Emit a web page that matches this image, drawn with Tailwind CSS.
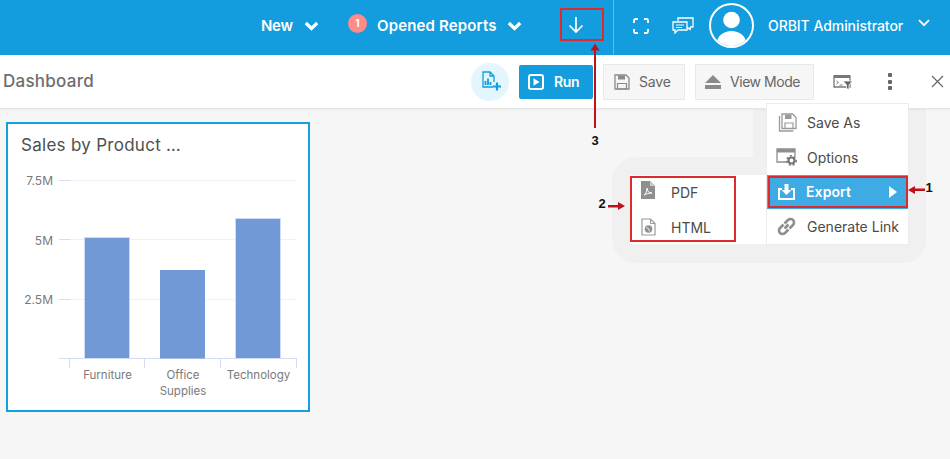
<!DOCTYPE html>
<html>
<head>
<meta charset="utf-8">
<script src="https://cdn.jsdelivr.net/npm/@tailwindcss/browser@4"></script>
</head>
<body class="font-['Inter','Liberation_Sans',sans-serif]">
<div class="relative w-[950px] h-[459px] overflow-hidden bg-[#f6f6f6] flex flex-col">

  <!-- Top bar -->
  <header class="h-[55px] shrink-0 bg-[#139cde] flex items-center text-white pl-[261px]">
    <span class="w-[32px] -mt-[2px] text-[15px] font-semibold tracking-[-0.3px] whitespace-nowrap">New</span>
    <svg class="ml-[11px] -mt-[4px] w-[15px] h-[10px]" viewBox="0 0 15 10"><path d="M1.800 2l5.700 5.500L13.200 2" fill="none" stroke="#fff" stroke-width="3.200"/></svg>
    <span class="ml-[29px] w-[19px] h-[19px] -mt-[9px] rounded-full bg-[#ff8a8a] flex items-center justify-center text-[10px] font-bold">1</span>
    <span class="ml-[10px] w-[120px] -mt-[2px] text-[15px] font-semibold tracking-[0.15px] whitespace-nowrap">Opened Reports</span>
    <svg class="ml-[10px] -mt-[4px] w-[15px] h-[10px]" viewBox="0 0 15 10"><path d="M1.800 2l5.700 5.500L13.200 2" fill="none" stroke="#fff" stroke-width="3.200"/></svg>
    <svg class="ml-[46px] -mt-[5px] w-[16px] h-[18px]" viewBox="0 0 16 18"><path d="M8 1v15M1.500 9.500L8 16l6.500-6.500" fill="none" stroke="#fff" stroke-width="1.700"/></svg>
    <div class="ml-[29px] w-[1px] h-[55px] bg-[#5fbce9]"></div>
    <svg class="ml-[19px] -mt-[4px] w-[16px] h-[16px]" viewBox="0 0 16 16"><path d="M1 5V2.500A1.500 1.500 0 0 1 2.500 1H5M11 1h2.500A1.500 1.500 0 0 1 15 2.500V5M15 11v2.500a1.500 1.500 0 0 1-1.500 1.500H11M5 15H2.500A1.500 1.500 0 0 1 1 13.500V11" fill="none" stroke="#fff" stroke-width="1.800"/></svg>
    <svg class="ml-[23px] -mt-[4px] w-[22px] h-[18px]" viewBox="0 0 22 18"><path d="M6 4V1h15v9h-2.500l-.5 2.500-3-2.500M1 5h14v8H6l-3 3v-3H1z" fill="none" stroke="#fff" stroke-width="1.300"/><path d="M4 8h8M4 10.500h6" stroke="#fff" stroke-width="1"/></svg>
    <div class="ml-[15px] -mt-[5px] w-[45px] h-[45px] rounded-full border-2 border-white overflow-hidden relative shrink-0">
      <svg class="w-full h-full" viewBox="0 0 41 41"><circle cx="20.500" cy="15" r="8.300" fill="#fff"/><ellipse cx="20.500" cy="38" rx="14.500" ry="12" fill="#fff"/></svg>
    </div>
    <span class="ml-[14px] w-[136px] -mt-[4px] text-[14px] font-medium tracking-[-0.05px] whitespace-nowrap">ORBIT Administrator</span>
    <svg class="ml-[14px] -mt-[9px] w-[12px] h-[8px]" viewBox="0 0 12 8"><path d="M1 1.200l5 5 5-5" fill="none" stroke="#fff" stroke-width="1.800"/></svg>
  </header>

  <!-- Toolbar -->
  <div class="relative z-20 h-[54px] shrink-0 bg-white border-b border-[#e4e4e4] shadow-[0_1px_2px_rgba(0,0,0,0.05)] flex items-center pl-[3px]">
    <span class="w-[468px] text-[17px] font-medium text-[#6e6e6e] tracking-[0.25px]">Dashboard</span>
    <div class="w-[38px] h-[38px] rounded-full bg-[#e3f5fd] flex items-center justify-center">
      <svg class="w-[20px] h-[21px] ml-[2px]" viewBox="0 0 20 21"><path d="M12 16H2V1h7l4 4v6M9 1v4h4" fill="none" stroke="#139cde" stroke-width="1.300"/><path d="M4.500 14V10M7 14V7.500M9.500 14v-3" stroke="#139cde" stroke-width="1.800"/><path d="M16 11.500v8M12 15.500h8" stroke="#139cde" stroke-width="2.200"/></svg>
    </div>
    <button class="ml-[10px] w-[74px] h-[34px] rounded-[2px] bg-[#139cde] text-white flex items-center pl-[9px]">
      <svg class="w-[16px] h-[16px]" viewBox="0 0 16 16"><rect x="1" y="1" width="14" height="14" rx="2" fill="none" stroke="#fff" stroke-width="2"/><path d="M5.500 4.200v7.600L11.500 8z" fill="#fff"/></svg>
      <span class="ml-[10px] text-[14px] font-semibold tracking-[-0.3px]">Run</span>
    </button>
    <button class="ml-[10px] w-[82px] h-[36px] bg-[#f6f6f6] border border-[#e9e9e9] text-[#666] flex items-center pl-[10px]">
      <svg class="w-[16px] h-[16px]" viewBox="0 0 16 16"><path d="M1 1h11l3 3v11H1z" fill="none" stroke="#8a8a8a" stroke-width="1.300"/><path d="M4 1.500h7v4H4z" fill="#8a8a8a"/><path d="M3.500 9.500h9V15h-9z" fill="none" stroke="#8a8a8a" stroke-width="1.200"/></svg>
      <span class="ml-[9px] text-[14px] tracking-[-0.2px]">Save</span>
    </button>
    <button class="ml-[10px] w-[119px] h-[36px] bg-[#f6f6f6] border border-[#e9e9e9] text-[#666] flex items-center pl-[8px]">
      <svg class="w-[18px] h-[16px]" viewBox="0 0 18 16"><path d="M9 1l8 8H1z" fill="#8a8a8a"/><rect x="1" y="11" width="16" height="4" fill="#8a8a8a"/></svg>
      <span class="ml-[8px] text-[14px] tracking-[-0.45px] whitespace-nowrap">View Mode</span>
    </button>
    <svg class="ml-[19px] w-[20px] h-[16px]" viewBox="0 0 20 16"><path d="M1 2h16v11H1z" fill="none" stroke="#777" stroke-width="1.300"/><path d="M1 1h16v3H1z" fill="#777"/><path d="M3.500 7l2 1.500-2 1.500M6.500 11h3" fill="none" stroke="#777" stroke-width="1"/><path d="M10 7h9.500l-3.500 4v4.500l-2.500-1V11z" fill="#666" stroke="#fff" stroke-width=".8"/></svg>
    <div class="ml-[35px] w-[4px] flex flex-col gap-[2.500px]">
      <span class="w-[4px] h-[4px] bg-[#666] rounded-[1px]"></span>
      <span class="w-[4px] h-[4px] bg-[#666] rounded-[1px]"></span>
      <span class="w-[4px] h-[4px] bg-[#666] rounded-[1px]"></span>
    </div>
    <svg class="ml-[39px] w-[13px] h-[13px]" viewBox="0 0 13 13"><path d="M1 1l11 11M12 1L1 12" stroke="#666" stroke-width="1.200"/></svg>
  </div>

  <!-- Canvas -->
  <main class="flex-1 pl-[6px] pt-[13px]">
    <section class="w-[304px] h-[290px] bg-white border-2 border-[#139fe0] relative">
      <h2 class="absolute left-[13px] top-[9px] text-[17px] text-[#4f4f4f] tracking-[0.28px] whitespace-nowrap">Sales by Product …</h2>
      <svg class="absolute left-[-2px] top-[-2px]" width="304" height="290" viewBox="6 122 304 290">
        <g stroke="#f0f1f5" stroke-width="1">
          <path d="M59 180.500h237M59 239.500h237M59 299.500h237"/>
        </g>
        <g stroke="#d3dcf3" stroke-width="1">
          <path d="M59 180.500h11M59 239.500h11M59 299.500h11"/>
          <path d="M59 358.500h238M69.500 358v10M144.500 358v10M220.500 358v10M296.500 358v10"/>
        </g>
        <g fill="#7099d6" stroke="#cfdcf5" stroke-width="1">
          <rect x="84.500" y="237.500" width="45" height="121"/>
          <rect x="160" y="270" width="45" height="88.500" stroke="none"/>
          <rect x="235.500" y="218.500" width="45" height="140"/>
        </g>
        <g font-family="Inter, Liberation Sans, sans-serif" font-size="12" fill="#7a7a7a">
          <text x="53" y="185" text-anchor="end">7.5M</text>
          <text x="53" y="245" text-anchor="end">5M</text>
          <text x="53" y="304" text-anchor="end">2.5M</text>
        </g>
        <g font-family="Inter, Liberation Sans, sans-serif" font-size="11.500" fill="#7a7a7a" text-anchor="middle">
          <text x="107.500" y="379">Furniture</text>
          <text x="183" y="379">Office</text>
          <text x="183" y="395">Supplies</text>
          <text x="258.500" y="379">Technology</text>
        </g>
      </svg>
    </section>
  </main>

  <!-- Halo behind the menus -->
  <div class="absolute z-10 left-[612px] top-[157px] w-[180px] h-[106px] rounded-[24px] bg-[#f0f0f0]"></div>
  <div class="absolute z-10 left-[753px] top-[90px] w-[173px] h-[173px] rounded-[22px] bg-[#f0f0f0]"></div>

  <!-- Export submenu -->
  <div class="absolute z-30 left-[630px] top-[175px] w-[136px] h-[69px] bg-white flex flex-col text-[14px] text-[#4a4a4a]">
    <div class="h-[35px] flex items-center pl-[11px]">
      <svg class="w-[14px] h-[18px] -mt-[5px]" viewBox="0 0 14 18"><path d="M0 0h9l5 5v13H0z" fill="#8f8f8f"/><path d="M9 0v5h5" fill="#c9c9c9"/><path d="M3 14c2-1 3-4 3-7 0 3 2 5 5 5-3 0-6 1-8 2z" fill="none" stroke="#fff" stroke-width="1"/></svg>
      <span class="ml-[16px]">PDF</span>
    </div>
    <div class="h-[34px] flex items-center pl-[11px]">
      <svg class="w-[15px] h-[18px]" viewBox="0 0 15 18"><path d="M1 1h8.500L14 5.500V17H1z" fill="none" stroke="#9a9a9a" stroke-width="1.200"/><path d="M9.500 1v4.500H14" fill="none" stroke="#9a9a9a"/><circle cx="7.500" cy="11" r="3.800" fill="#8f8f8f"/><path d="M5 9.500l2.500 1 1 3" fill="none" stroke="#fff" stroke-width=".8"/></svg>
      <span class="ml-[15px]">HTML</span>
    </div>
  </div>

  <!-- Main menu -->
  <div class="absolute z-30 left-[766px] top-[103px] w-[143px] h-[142px] bg-white border border-[#ececec] flex flex-col text-[14px] text-[#4a4a4a] pt-[1px]">
    <div class="h-[35px] flex items-center pl-[11px]">
      <svg class="w-[19px] h-[19px]" viewBox="0 0 19 19"><path d="M1.500 3v15h14" fill="none" stroke="#9a9a9a" stroke-width="1.300"/><path d="M4 1h10.500L18 4.500V15.500H4z" fill="none" stroke="#9a9a9a" stroke-width="1.300"/><path d="M7 1.500h6.500v4.500H7z" fill="#9a9a9a"/><path d="M7 10h8v5.500H7z" fill="none" stroke="#9a9a9a" stroke-width="1.200"/></svg>
      <span class="ml-[10px]">Save As</span>
    </div>
    <div class="h-[35px] flex items-center pl-[9px]">
      <svg class="w-[21px] h-[18px]" viewBox="0 0 21 18"><path d="M11 14H1V1h18v7" fill="none" stroke="#8f8f8f" stroke-width="1.300"/><path d="M1 1h18v3.500H1z" fill="#8f8f8f"/><circle cx="15.500" cy="12.500" r="3" fill="none" stroke="#777" stroke-width="2.200"/><circle cx="15.500" cy="12.500" r="4.700" fill="none" stroke="#777" stroke-width="1.500" stroke-dasharray="2 2"/></svg>
      <span class="ml-[10px]">Options</span>
    </div>
    <div class="h-[35px] bg-[#3fabe5] text-white font-semibold flex items-center pl-[11px]">
      <svg class="w-[17px] h-[17px]" viewBox="0 0 17 17"><path d="M4 6H1v10h15V6h-3" fill="none" stroke="#fff" stroke-width="2"/><path d="M6.500 1h4v6h3l-5 5-5-5h3z" fill="#fff"/></svg>
      <span class="ml-[11px] tracking-[0.1px] w-[46px]">Export</span>
      <svg class="ml-[37px] w-[8px] h-[12px]" viewBox="0 0 8 12"><path d="M0 0l8 6-8 6z" fill="#fff"/></svg>
    </div>
    <div class="h-[35px] flex items-center pl-[10px]">
      <svg class="w-[19px] h-[19px]" viewBox="0 0 19 19"><path d="M7.500 11.500l4-4M6.500 7.500L3 11a3.500 3.500 0 0 0 5 5l3.500-3.500M7.500 6.500L11 3a3.500 3.500 0 0 1 5 5l-3.500 3.500" fill="none" stroke="#8f8f8f" stroke-width="2.600"/></svg>
      <span class="ml-[11px] whitespace-nowrap">Generate Link</span>
    </div>
  </div>

  <!-- Annotations -->
  <div class="absolute z-40 left-[560px] top-[8px] w-[44px] h-[33px] border-2 border-[#dd2a2e]"></div>
  <div class="absolute z-40 left-[768px] top-[176px] w-[140px] h-[32px] border-2 border-[#dd2a2e]"></div>
  <div class="absolute z-40 left-[630px] top-[176px] w-[106px] h-[66px] border-2 border-[#dd2a2e]"></div>
  <svg class="absolute z-40 left-0 top-0 pointer-events-none" width="950" height="459" viewBox="0 0 950 459">
    <g fill="#c0101c" stroke="none">
      <rect x="594" y="50" width="2" height="78"/>
      <path d="M595 43.500l4.500 7h-9z"/>
      <rect x="914" y="188.500" width="11" height="2.500"/>
      <path d="M908 190l7-4v8z"/>
      <rect x="608" y="205" width="10" height="2.500"/>
      <path d="M625 206l-7-4v8z"/>
    </g>
    <g font-family="Liberation Sans, sans-serif" font-size="13" font-weight="700" fill="#111" text-anchor="middle">
      <text x="595" y="145">3</text>
      <text x="929" y="192">1</text>
      <text x="602" y="208">2</text>
    </g>
  </svg>
</div>
</body>
</html>
